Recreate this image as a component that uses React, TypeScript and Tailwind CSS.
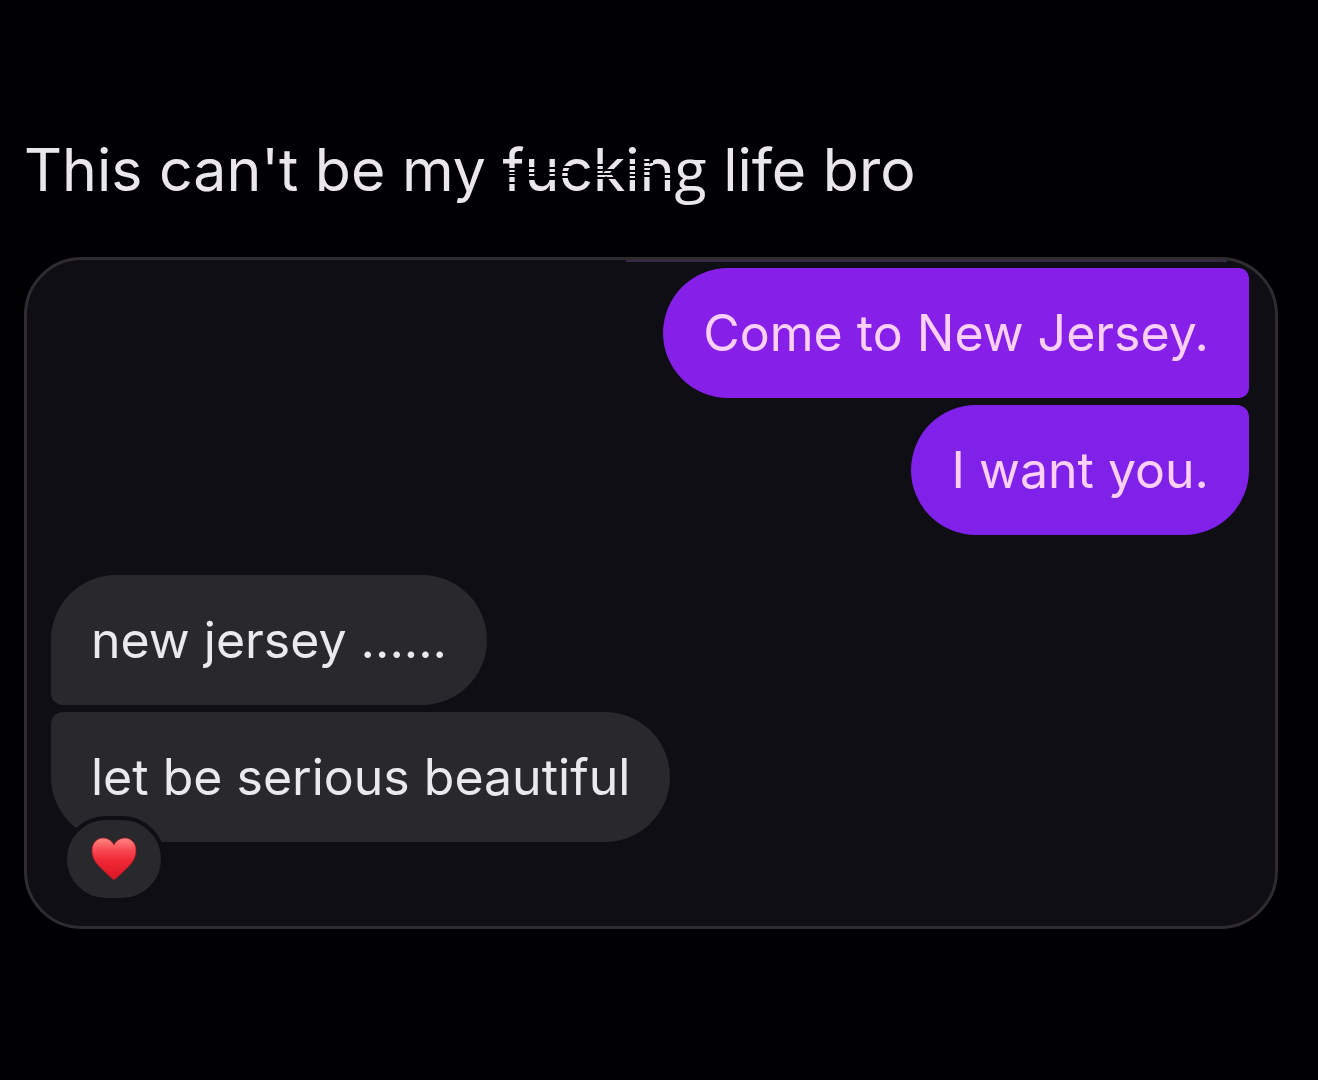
import type { ReactNode } from 'react';

function Bubble({ className, children }: { className: string; children: ReactNode }) {
  return (
    <p className={`relative w-fit px-10 py-8 text-[50px] leading-[66px] whitespace-nowrap ${className}`}>
      {children}
    </p>
  );
}

function Scratches() {
  return (
    <svg className="absolute top-0 left-0 h-[76px] w-[210px]" viewBox="0 0 210 76" aria-hidden="true">
      <g stroke="#000002" strokeWidth="2">
        <path d="M3 39H17M3 43H17M3 46H17M3 53H17" />
        <path d="M22 38H52M22 43H52M22 47H52M22 49H52" />
        <path d="M55 37H68M55 42H68M55 47H68M68 40H86M68 42H86M68 45H86M68 48H86" />
        <path d="M90 35H102M90 40H118M90 44H110M94 48H118" />
        <path d="M122 35H136M122 41H136M122 45H136M122 49H136" />
        <path d="M138 32H150M138 37H150M138 41H150M138 46H150M154 44H174M154 49H174" />
      </g>
    </svg>
  );
}

function Heart() {
  return (
    <svg className="h-11 w-12" viewBox="0 0 48 44" role="img" aria-label="Red heart">
      <defs>
        <linearGradient id="heart" x1="0" y1="0" x2="0" y2="1">
          <stop offset="0" stopColor="#ff8583" />
          <stop offset="0.3" stopColor="#f74850" />
          <stop offset="0.55" stopColor="#ef2735" />
          <stop offset="1" stopColor="#d91524" />
        </linearGradient>
      </defs>
      <path
        fill="url(#heart)"
        stroke="#ad1825"
        strokeWidth="0.7"
        d="M24 43C20 40 14 34 9 29C4 24 2 19 2 13C2 6 7 1 13 1C18 1 22 4 24 8C26 4 30 1 35 1C41 1 46 6 46 13C46 19 44 24 39 29C34 34 28 40 24 43Z"
      />
    </svg>
  );
}

export default function App() {
  return (
    <main className="min-h-screen bg-[#000002] pt-[130px] pr-10 pb-10 pl-6 font-['Inter',sans-serif]">
      <h1 className="text-[59px] leading-[76px] font-normal whitespace-nowrap text-[#e9e7ea]">
        This can't be my{' '}
        <span className="relative inline-block">
          fuckin<span className="font-['Open_Sans',sans-serif]">g</span>
          <Scratches />
        </span>{' '}
        life bro
      </h1>

      <section
        aria-label="Conversation"
        className="relative mt-[49px] flex flex-col rounded-[58px] border-3 border-[#2e2c31] bg-[#0e0e14] pt-2 pr-[26px] pb-[84px] pl-6"
      >
        <span className="absolute top-0 right-12 left-[48%] h-[2px] bg-[#362a45]" aria-hidden="true" />
        <div className="flex flex-col items-end gap-[7px] text-[#fbd0ff]">
          <Bubble className="rounded-l-[65px] rounded-r-[10px] bg-[#861fe7]">Come to New Jersey.</Bubble>
          <Bubble className="rounded-[65px] rounded-tr-[12px] bg-[#8021e9]">I want you.</Bubble>
        </div>
        <div className="mt-10 flex flex-col items-start gap-[7px] text-[#e9e9ee]">
          <Bubble className="rounded-[65px] rounded-bl-[12px] bg-[#28282d]">new jersey ......</Bubble>
          <Bubble className="rounded-[65px] rounded-tl-[12px] bg-[#28282d]">
            let be serious beautiful
            <span className="absolute -bottom-[60px] left-3 flex h-[86px] w-[102px] items-center justify-center rounded-[43px] border-4 border-[#0e0e14] bg-[#28282d]">
              <Heart />
            </span>
          </Bubble>
        </div>
      </section>
    </main>
  );
}
